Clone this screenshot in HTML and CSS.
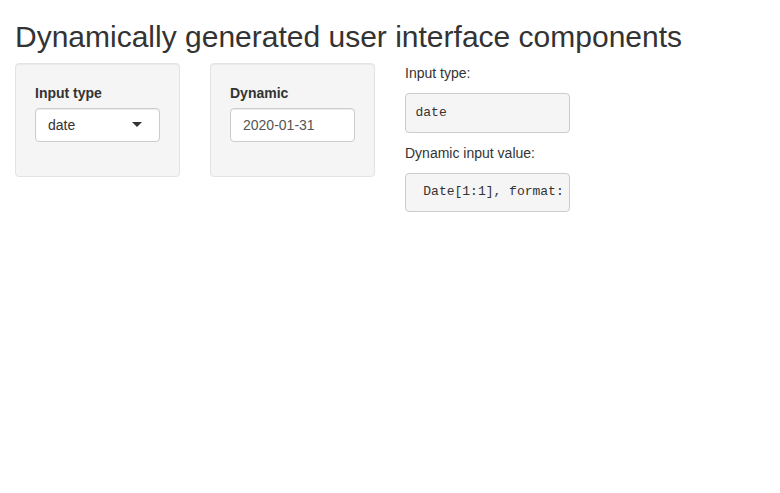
FILE: index.html
```html
<!DOCTYPE html>
<html>
<head>
<meta charset="utf-8">
<title>Dynamic UI</title>
<link rel="stylesheet" href="styles.css">
</head>
<body>
<div class="container-fluid">
  <h2 class="title">Dynamically generated user interface components</h2>
  <div class="row">
    <div class="col">
      <div class="well">
        <div class="form-group">
          <label class="control-label">Input type</label>
          <div class="select">
            <span class="select-value">date</span>
            <span class="caret"></span>
          </div>
        </div>
      </div>
    </div>
    <div class="col">
      <div class="well">
        <div class="form-group">
          <label class="control-label">Dynamic</label>
          <input class="form-control" type="text" value="2020-01-31">
        </div>
      </div>
    </div>
    <div class="col">
      <p class="out-label">Input type:</p>
      <pre class="verbatim">date</pre>
      <p class="out-label">Dynamic input value:</p>
      <pre class="verbatim"> Date[1:1], format: "2020-01-31"</pre>
    </div>
  </div>
</div>
</body>
</html>
```

FILE: styles.css
```css
* { box-sizing: border-box; }
html, body { margin: 0; padding: 0; background: #fff; }
body {
  font-family: "Liberation Sans", Arial, Helvetica, sans-serif;
  font-size: 14px;
  line-height: 1.42857143;
  color: #333;
}
.container-fluid { padding: 0 15px; }
.title {
  font-size: 30px;
  font-weight: 500;
  line-height: 1.1;
  margin: 20px 0 10px;
}
.row { display: flex; margin: 0 -15px; }
.col { width: 25%; padding: 0 15px; }
.well {
  min-height: 20px;
  padding: 19px;
  background: #f5f5f5;
  border: 1px solid #e3e3e3;
  border-radius: 4px;
  box-shadow: inset 0 1px 1px rgba(0,0,0,.05);
}
.form-group { margin-bottom: 15px; }
.control-label {
  display: inline-block;
  font-weight: bold;
  margin-bottom: 5px;
}
.select {
  position: relative;
  height: 34px;
  padding: 6px 12px;
  background: #fff;
  border: 1px solid #ccc;
  border-radius: 4px;
  box-shadow: inset 0 1px 1px rgba(0,0,0,.075);
  color: #333;
  line-height: 20px;
}
.caret {
  position: absolute;
  right: 17px;
  top: 50%;
  margin-top: -3px;
  width: 0;
  height: 0;
  border-style: solid;
  border-width: 5px 5px 0 5px;
  border-color: #333 transparent transparent transparent;
}
.form-control {
  display: block;
  width: 100%;
  height: 34px;
  padding: 6px 12px;
  font-family: inherit;
  font-size: 14px;
  line-height: 1.42857143;
  color: #555;
  background: #fff;
  border: 1px solid #ccc;
  border-radius: 4px;
  box-shadow: inset 0 1px 1px rgba(0,0,0,.075);
  margin: 0;
}
.out-label { margin: 0 0 10px; }
.verbatim {
  display: block;
  margin: 0 0 10px;
  padding: 9.5px;
  font-family: "Liberation Mono", "Courier New", monospace;
  font-size: 13px;
  line-height: 1.42857143;
  color: #333;
  background: #f5f5f5;
  border: 1px solid #ccc;
  border-radius: 4px;
  white-space: pre;
  overflow: hidden;
}
```
